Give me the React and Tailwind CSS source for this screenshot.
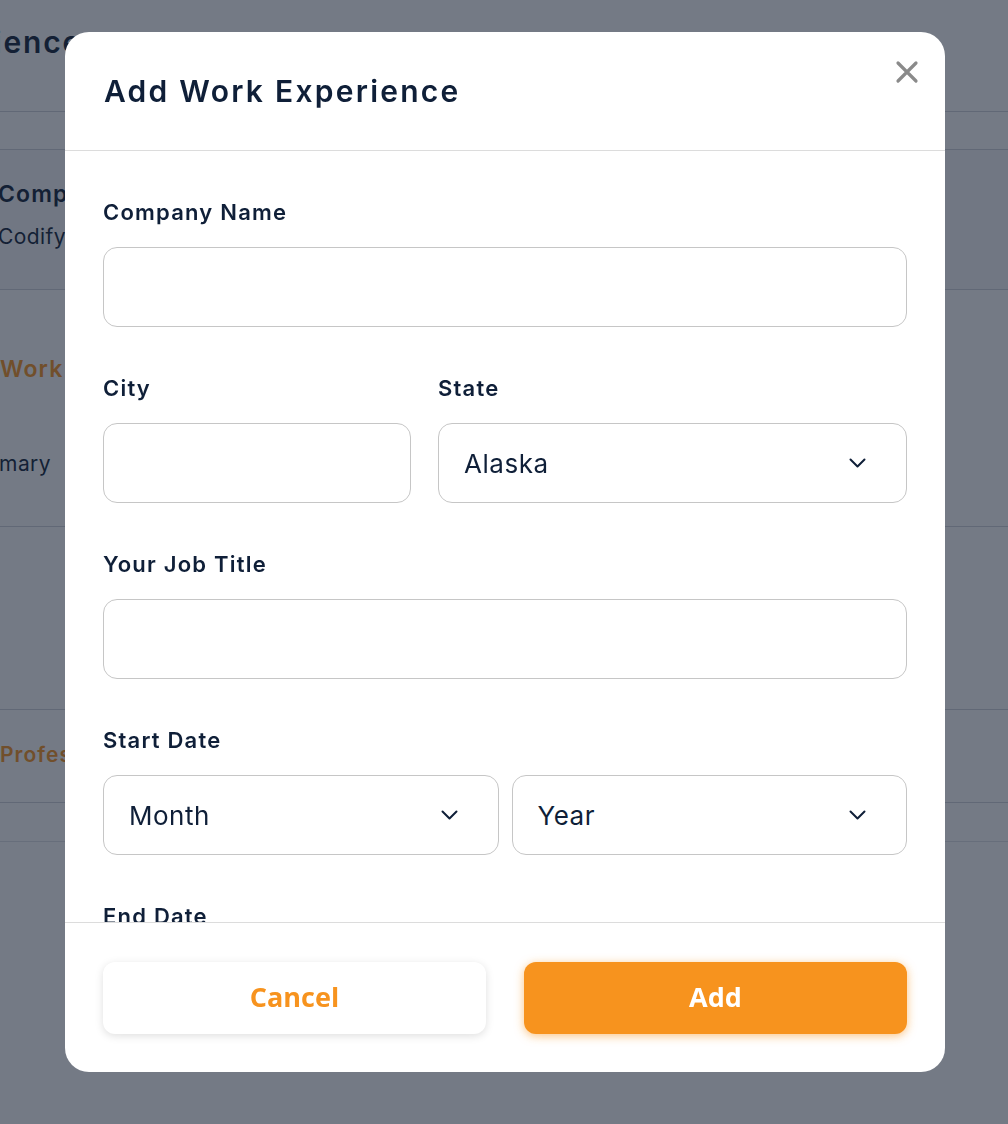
import React from 'react';

const FONT = { fontFamily: 'Inter, "Noto Sans", sans-serif' };
const BTN_FONT = { fontFamily: '"Open Sans", sans-serif' };

// page that sits behind the dimmed overlay
function BackgroundPage() {
  return (
    <div className="w-full text-[#0f1f38]">
      <div className="h-[112px] border-b border-[#cfd3da] pt-[23px]">
        <div className="w-[82px] flex justify-end">
          <h1 className="whitespace-nowrap text-[30px] leading-[38px] font-semibold tracking-[0.06em]">Work Experience</h1>
        </div>
      </div>
      <div className="h-[38px] border-b border-[#cfd3da] bg-white" />
      <div className="h-[140px] border-b border-[#cfd3da] bg-[#f7f8fa] pt-[29px] -ml-[2px]">
        <p className="whitespace-nowrap text-[23px] leading-[30px] font-semibold tracking-[0.05em]">Company Name</p>
        <p className="whitespace-nowrap text-[21px] leading-[28px] mt-[14px] tracking-[0.02em]">Codify Labs</p>
      </div>
      <div className="h-[237px] border-b border-[#cfd3da] pt-[64px]">
        <p className="whitespace-nowrap text-[23px] leading-[30px] font-semibold tracking-[0.05em] text-[#f7931e]">Work Summary</p>
        <div className="w-[51px] flex justify-end mt-[66px]">
          <p className="whitespace-nowrap text-[21px] leading-[28px] tracking-[0.02em]">Job Summary</p>
        </div>
      </div>
      <div className="h-[183px] border-b border-[#cfd3da]" />
      <div className="h-[93px] border-b border-[#cfd3da] pt-[31px]">
        <p className="whitespace-nowrap text-[21px] leading-[28px] font-semibold tracking-[0.05em] text-[#f7931e]">Professional Summary</p>
      </div>
      <div className="h-[39px] border-b border-[#dfe2e7] bg-white" />
    </div>
  );
}

function Chevron() {
  return (
    <svg width="17" height="10" viewBox="0 0 17 10" fill="none" stroke="#0f1f38" strokeWidth="2" strokeLinecap="round" strokeLinejoin="round">
      <polyline points="1.5,1.5 8.5,8.5 15.5,1.5" />
    </svg>
  );
}

function Field({ label, children }) {
  return (
    <div className="mb-[47px]">
      <label className="block text-[22px] leading-7 font-semibold tracking-[0.055em] text-[#0f1f38] mb-[21px]">{label}</label>
      {children}
    </div>
  );
}

function TextBox({ className = '' }) {
  return (
    <input
      type="text"
      className={`h-[80px] rounded-[14px] border border-[#c6c6c6] bg-white px-[25px] text-[26px] text-[#0f1f38] outline-none ${className}`}
    />
  );
}

function SelectBox({ value, className = '' }) {
  return (
    <div className={`h-[80px] rounded-[14px] border border-[#c6c6c6] bg-white pl-[25px] pr-[40px] flex items-center justify-between ${className}`}>
      <span className="text-[26px] tracking-[0.02em] text-[#0f1f38]">{value}</span>
      <Chevron />
    </div>
  );
}

export default function App() {
  return (
    <div className="relative h-[1124px] w-full overflow-hidden bg-white" style={FONT}>
      <BackgroundPage />

      {/* dim overlay */}
      <div className="fixed inset-0 bg-[#172134]/60" />

      {/* modal */}
      <div className="fixed inset-0 flex justify-center pt-8 pl-[2px]">
        <div className="relative w-[880px] h-[1040px] bg-white rounded-3xl flex flex-col overflow-hidden">
          <div className="h-[119px] shrink-0 border-b border-[#dcdcdc] px-[39px] flex items-center">
            <h2 className="text-[30px] font-semibold tracking-[0.075em] text-[#0f1f38]">Add Work Experience</h2>
          </div>
          <button className="absolute right-[25px] top-[27px] cursor-pointer">
            <svg width="26" height="26" viewBox="0 0 26 26" fill="none" stroke="#8a8a8a" strokeWidth="3.2" strokeLinecap="round">
              <path d="M4 4 L22 22 M22 4 L4 22" />
            </svg>
          </button>

          <div className="flex-1 overflow-hidden px-[38px] pt-[47px]">
            <Field label="Company Name">
              <TextBox className="w-full" />
            </Field>
            <div className="flex gap-[27px]">
              <div className="w-[308px]">
                <Field label="City">
                  <TextBox className="w-full" />
                </Field>
              </div>
              <div className="flex-1">
                <Field label="State">
                  <SelectBox value="Alaska" />
                </Field>
              </div>
            </div>
            <Field label="Your Job Title">
              <TextBox className="w-full" />
            </Field>
            <Field label="Start Date">
              <div className="flex gap-[13px]">
                <SelectBox value="Month" className="flex-1" />
                <SelectBox value="Year" className="flex-1" />
              </div>
            </Field>
            <Field label="End Date">
              <div className="flex gap-[13px]">
                <SelectBox value="Month" className="flex-1" />
                <SelectBox value="Year" className="flex-1" />
              </div>
            </Field>
          </div>

          <div className="h-[150px] shrink-0 border-t border-[#dcdcdc] px-[38px] flex items-center gap-[38px]">
            <button
              className="flex-1 h-[72px] rounded-[12px] bg-white text-[27px] font-bold text-[#f7931e] shadow-[0_2px_8px_rgba(0,0,0,0.13)]"
              style={BTN_FONT}
            >
              Cancel
            </button>
            <button
              className="flex-1 h-[72px] rounded-[12px] bg-[#f7931e] text-[27px] font-bold text-white shadow-[0_2px_10px_rgba(247,147,30,0.55)]"
              style={BTN_FONT}
            >
              Add
            </button>
          </div>
        </div>
      </div>
    </div>
  );
}
